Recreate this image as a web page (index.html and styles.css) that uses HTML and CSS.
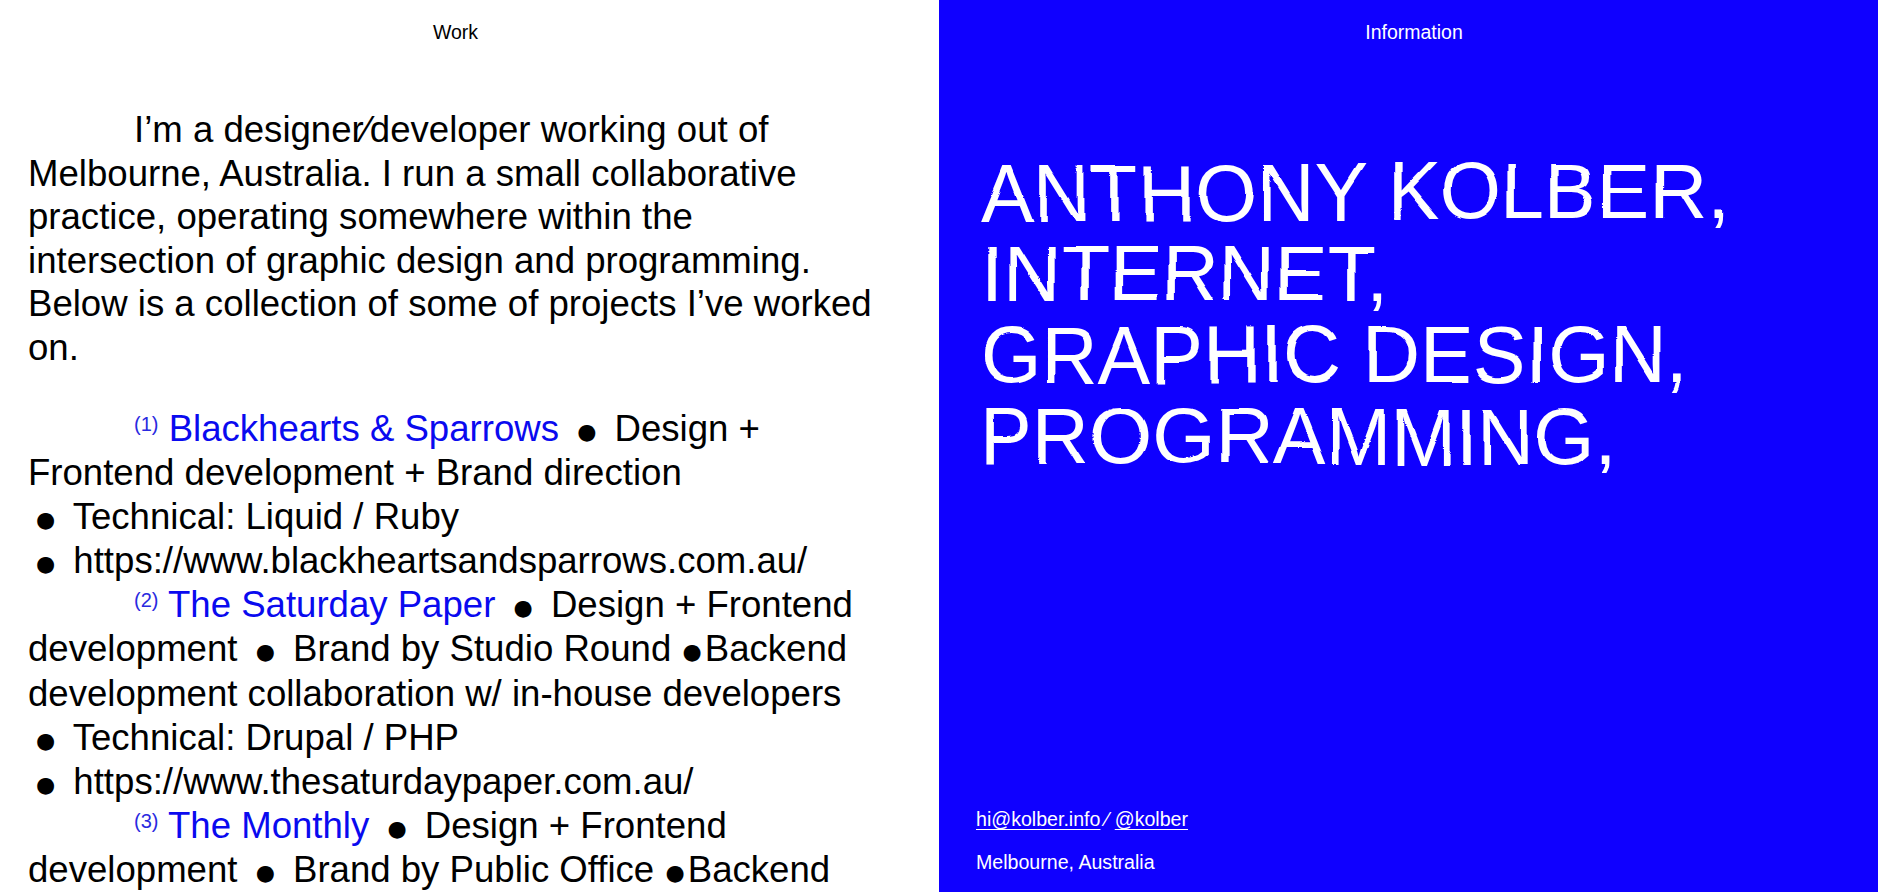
FILE: index.html
```html
<!DOCTYPE html>
<html lang="en">
<head>
<meta charset="utf-8">
<title>Anthony Kolber</title>
<link rel="stylesheet" href="styles.css">
</head>
<body>
<div class="page">
  <section class="work">
    <header class="panel-head">Work</header>
    <p class="intro">I’m a designer⁄developer working out of Melbourne, Australia. I run a small collaborative practice, operating somewhere within the intersection of graphic design and programming. Below is a collection of some of projects I’ve worked on.</p>
    <div class="projects">
      <p class="project"><sup class="num">(1)</sup> <a class="proj-link" href="#">Blackhearts &amp; Sparrows</a> <span class="dot">●</span> Design + Frontend development + Brand direction<br><span class="dot">●</span> Technical: Liquid / Ruby<br><span class="dot">●</span> https://www.blackheartsandsparrows.com.au/</p>
      <p class="project"><sup class="num">(2)</sup> <a class="proj-link" href="#">The Saturday Paper</a> <span class="dot">●</span> Design + Frontend development <span class="dot">●</span> Brand by Studio Round <span class="dot tight">●</span> Backend development collaboration w/ in-house developers<br><span class="dot">●</span> Technical: Drupal / PHP<br><span class="dot">●</span> https://www.thesaturdaypaper.com.au/</p>
      <p class="project"><sup class="num">(3)</sup> <a class="proj-link" href="#">The Monthly</a> <span class="dot">●</span> Design + Frontend development <span class="dot">●</span> Brand by Public Office <span class="dot tight">●</span> Backend development collaboration w/ in-house developers<br><span class="dot">●</span> Technical: Drupal / PHP<br><span class="dot">●</span> https://www.themonthly.com.au/</p>
    </div>
  </section>
  <section class="info">
    <header class="panel-head">Information</header>
    <h1 class="title">ANTHONY KOLBER,<br>INTERNET,<br>GRAPHIC DESIGN,<br>PROGRAMMING,</h1>
    <div class="contact">
      <p><a class="contact-link" href="#">hi@kolber.info</a><span class="slash">⁄</span><a class="contact-link" href="#">@kolber</a></p>
      <p>Melbourne, Australia</p>
    </div>
  </section>
</div>
<svg class="defs" width="0" height="0" aria-hidden="true">
  <filter id="wobble" x="-5%" y="-5%" width="110%" height="110%">
    <feTurbulence type="fractalNoise" baseFrequency="0.0035 0.009" numOctaves="1" seed="7" result="noise"/>
    <feDisplacementMap in="SourceGraphic" in2="noise" scale="12" xChannelSelector="R" yChannelSelector="G"/>
  </filter>
</svg>
</body>
</html>
```
FILE: styles.css
```css
* { box-sizing: border-box; }
html, body { margin: 0; height: 100%; }
body {
  font-family: "Liberation Sans", Arial, sans-serif;
  overflow: hidden;
  background: #fff;
}
.page {
  display: grid;
  grid-template-columns: 1fr 1fr;
  height: 100vh;
}
.panel-head {
  font-size: 19.5px;
  line-height: 22px;
  padding-top: 21px;
  text-align: center;
}
.work {
  background: #fff;
  color: #000;
  overflow: hidden;
  padding: 0 56px 0 28px;
}
.intro {
  margin: 65px 0 0;
  font-size: 36.6px;
  line-height: 43.5px;
  text-indent: 106px;
}
.projects { margin-top: 38px; }
.project {
  margin: 0;
  font-size: 36.6px;
  line-height: 44.1px;
  text-indent: 106px;
}
.num {
  font-size: 20px;
  line-height: 0;
  vertical-align: 10px;
  color: #2a2ae0;
}
.proj-link {
  color: #0a0aef;
  text-decoration: none;
}
.dot {
  font-family: "DejaVu Sans", sans-serif;
  font-size: 22px;
  line-height: 1;
  vertical-align: 2px;
  margin: 0 8px;
}
.dot.tight { margin: 0 -7px 0 1px; }
.info {
  background: #0f00ff;
  color: #fff;
  display: flex;
  flex-direction: column;
  padding: 0 37px 19px;
  overflow: hidden;
}
.info .panel-head { padding-left: 11px; }
.title {
  margin: 109px 0 0;
  padding-left: 5px;
  font-weight: normal;
  font-size: 79px;
  line-height: 81px;
  filter: url(#wobble);
}
.contact {
  margin-top: auto;
  font-size: 19.6px;
  line-height: 22.4px;
}
.contact p { margin: 0; }
.contact p + p { margin-top: 20.6px; }
.contact-link {
  color: #fff;
  text-decoration: underline;
  text-underline-offset: 3px;
}
.slash { margin: 0 6px 0 5px; }
.defs {
  display: block;
  width: 0;
  height: 0;
  overflow: hidden;
}
```
